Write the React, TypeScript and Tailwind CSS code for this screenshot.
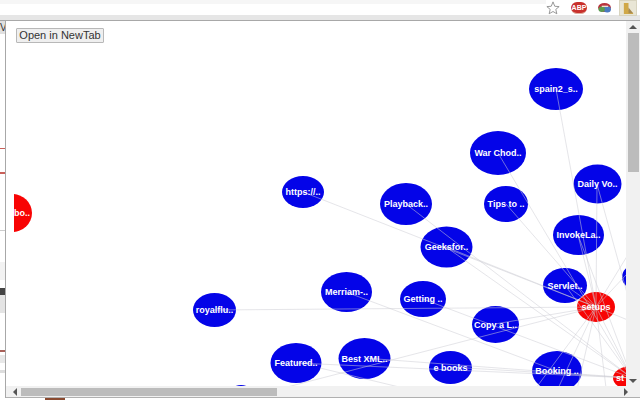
const nodes = [
  { label: 'spain2_s..', x: 556, y: 89, rx: 27, ry: 21 },
  { label: 'War Chod..', x: 498, y: 153, rx: 28, ry: 22 },
  { label: 'Daily Vo..', x: 597.5, y: 184, rx: 24, ry: 19.5 },
  { label: 'https://..', x: 303, y: 192, rx: 21, ry: 16 },
  { label: 'Playback..', x: 406, y: 204, rx: 26, ry: 21 },
  { label: 'Tips to ..', x: 506, y: 204, rx: 22, ry: 18 },
  { label: 'InvokeLa..', x: 578.5, y: 235, rx: 25.5, ry: 20 },
  { label: 'Geeksfor..', x: 446.5, y: 247, rx: 26, ry: 20.5 },
  { label: 'Servlet..', x: 565, y: 285.5, rx: 22, ry: 17.5 },
  { label: 'Merriam-..', x: 346.5, y: 292, rx: 25.5, ry: 20 },
  { label: 'Getting ..', x: 423, y: 299, rx: 23, ry: 18 },
  { label: 'Copy a L..', x: 495.5, y: 324.5, rx: 23.5, ry: 18.5 },
  { label: 'royalflu..', x: 214.5, y: 310, rx: 21.5, ry: 17 },
  { label: 'Featured..', x: 296, y: 363, rx: 25.5, ry: 20 },
  { label: 'Best XML..', x: 364.5, y: 358.5, rx: 26, ry: 20.5 },
  { label: 'e books', x: 450.5, y: 367.5, rx: 21.5, ry: 16.5 },
  { label: 'Booking ..', x: 557, y: 371, rx: 25, ry: 20 },
  { label: '', x: 241, y: 399, rx: 14, ry: 14 },
  { label: '', x: 640, y: 277, rx: 18, ry: 14 },
  { label: 'setups', x: 596, y: 307, rx: 19, ry: 15, red: true },
  { label: 'st', x: 632, y: 378, rx: 19, ry: 12, red: true },
  { label: 'bo..', x: 12, y: 213, rx: 20, ry: 19, red: true },
];

// x1 y1 x2 y2
const edges = [
  [556, 89, 596, 307],
  [498, 153, 632, 378],
  [597, 184, 596, 307],
  [597, 184, 640, 340],
  [303, 192, 596, 307],
  [406, 204, 632, 378],
  [506, 204, 596, 307],
  [578, 235, 596, 307],
  [578, 235, 632, 378],
  [565, 285, 596, 307],
  [565, 285, 632, 378],
  [446, 247, 596, 307],
  [446, 247, 632, 378],
  [214, 310, 596, 307],
  [346, 292, 557, 371],
  [423, 299, 632, 378],
  [495, 324, 596, 307],
  [241, 399, 596, 307],
  [296, 363, 632, 378],
  [364, 358, 632, 378],
  [450, 367, 632, 378],
  [320, 368, 420, 392],
  [533, 392, 596, 307],
  [548, 410, 596, 307],
  [570, 420, 596, 307],
  [610, 420, 596, 307],
  [596, 307, 632, 378],
  [596, 307, 640, 260],
  [596, 307, 640, 235],
  [596, 307, 640, 325],
  [640, 300, 632, 378],
];

function StrokeArrow({ points }: { points: string }) {
  return (
    <svg viewBox="0 0 8 8" className="w-[8px] h-[8px]">
      <polygon points={points} fill="#555" />
    </svg>
  );
}

function Toolbar() {
  return (
    <div className="h-[21px] shrink-0 flex flex-col bg-[#e6e6e6] border-b border-[#a8a8a8]">
      <div className="h-[15px] flex items-start bg-white">
        <div className="flex-1 h-[4px] bg-[#f6f6f6]" />
        <svg viewBox="0 0 16 16" className="w-[14px] h-[14px] mt-[1px] mr-[11px]">
          <polygon
            points="8,1 10,6 15,6.4 11.2,9.6 12.4,14.6 8,12 3.6,14.6 4.8,9.6 1,6.4 6,6"
            fill="#fff"
            stroke="#8a8a8a"
            strokeWidth="1"
          />
        </svg>
        <div className="w-[16px] h-[12px] mt-[2px] rounded-[6px] bg-[#c8302c] border-b border-[#e0b0a0] text-white text-[7px] leading-[11px] font-bold text-center mr-[10px]">
          ABP
        </div>
        <svg viewBox="0 0 16 12" className="w-[15px] h-[11px] mt-[2px] mr-[7px]">
          <ellipse cx="8" cy="6" rx="7" ry="5" fill="#b8323c" />
          <ellipse cx="11" cy="8" rx="4" ry="3.5" fill="#4a7ac0" />
          <ellipse cx="5" cy="8" rx="3.5" ry="3" fill="#5a9a50" />
          <rect x="5" y="4" width="7" height="1.5" fill="#f0e0d0" />
        </svg>
        <div className="w-[18px] h-[16px] mr-[3px] bg-[#e9e6d6] border border-[#d8d4c0] flex items-center justify-center">
          <svg viewBox="0 0 14 14" className="w-[13px] h-[13px]">
            <path d="M2 1h5v7l5 4v1H2z" fill="#d0a848" />
            <path d="M7 6l5 6H7z" fill="#a88a50" />
          </svg>
        </div>
      </div>
    </div>
  );
}

function PageEdge() {
  return (
    <div className="w-[6px] shrink-0 bg-white border-r border-[#a8a8a8] overflow-hidden flex flex-col">
      <div className="h-[13px] shrink-0 bg-[#e0e0e0] text-[10px] leading-[13px] text-[#333] font-['Liberation_Sans'] whitespace-nowrap">
        Vi
      </div>
      <div className="h-[1px] mt-[114px] shrink-0 bg-[#c9605a]" />
      <div className="h-[2px] mt-[23px] shrink-0 bg-[#c9605a]" />
      <div className="h-[1px] mt-[56px] shrink-0 bg-[#cccccc]" />
      <div className="h-[18px] mt-[31px] shrink-0 bg-[#f2f2f2]" />
      <div className="h-[7px] mt-[8px] shrink-0 bg-[#444444]" />
      <div className="h-[18px] shrink-0 bg-[#e4e4e4]" />
      <div className="h-[2px] mt-[37px] shrink-0 bg-[#a86058]" />
      <div className="h-[8px] mt-[3px] shrink-0 bg-[#e8e8e8]" />
      <div className="h-[3px] mt-[7px] shrink-0 bg-[#dddddd]" />
    </div>
  );
}

function Graph() {
  return (
    <svg
      viewBox="14 29 612 357"
      className="absolute left-[8px] top-[8px] w-[612px] h-[357px] font-['Liberation_Sans']"
    >
      {nodes.map((n, i) => (
        <ellipse key={i} cx={n.x} cy={n.y} rx={n.rx} ry={n.ry} fill={n.red ? '#f80404' : '#0404e8'} />
      ))}
      {edges.map((e, i) => (
        <line key={i} x1={e[0]} y1={e[1]} x2={e[2]} y2={e[3]} stroke="#cfcfd6" strokeWidth="0.7" opacity="0.75" />
      ))}
      {nodes.map((n, i) =>
        n.label ? (
          <text
            key={i}
            x={n.label === 'st' ? 616 : n.label === 'bo..' ? 14 : n.x}
            y={n.y + 3.2}
            textAnchor={n.label === 'st' || n.label === 'bo..' ? 'start' : 'middle'}
            fontSize="9"
            fontWeight="bold"
            className="fill-white"
          >
            {n.label}
          </text>
        ) : null,
      )}
    </svg>
  );
}

export default function App() {
  return (
    <div className="w-[640px] h-[400px] flex flex-col bg-white overflow-hidden font-['Liberation_Sans',Arial,sans-serif]">
      <Toolbar />
      <div className="flex-1 min-h-0 flex">
        <PageEdge />
        <div className="flex-1 min-w-0 flex flex-col">
          <div className="flex-1 min-h-0 flex">
            <div className="relative flex-1 min-w-0 overflow-hidden bg-white">
              <Graph />
              <button className="relative ml-[10px] mt-[7px] w-[88px] h-[15px] flex items-center justify-center bg-[#efefef] border border-[#b8b8b8] rounded-[1px] text-[11px] leading-none text-[#333]">
                Open in NewTab
              </button>
            </div>
            {/* vertical scrollbar */}
            <div className="w-[14px] shrink-0 bg-[#f1f1f1] flex flex-col items-center">
              <div className="h-[12px] flex items-center">
                <StrokeArrow points="4,2 8,6 0,6" />
              </div>
              <div className="w-[11px] h-[139px] bg-[#bcbcbc]" />
              <div className="flex-1" />
              <div className="h-[10px] flex items-center">
                <StrokeArrow points="0,2 8,2 4,6" />
              </div>
            </div>
          </div>
          {/* horizontal scrollbar */}
          <div className="h-[12px] shrink-0 bg-[#f1f1f1] flex items-center border-b border-[#b0b0b0]">
            <div className="w-[15px] flex justify-end pr-[2px]">
              <StrokeArrow points="2,4 6,0 6,8" />
            </div>
            <div className="w-[256px] h-[8px] bg-[#bcbcbc]" />
            <div className="flex-1" />
            <div className="w-[18px] flex">
              <StrokeArrow points="2,0 6,4 2,8" />
            </div>
          </div>
        </div>
      </div>
      <div className="h-[2px] shrink-0 flex bg-white">
        <div className="ml-[45px] w-[20px] bg-[#8a4a30]" />
      </div>
    </div>
  );
}
